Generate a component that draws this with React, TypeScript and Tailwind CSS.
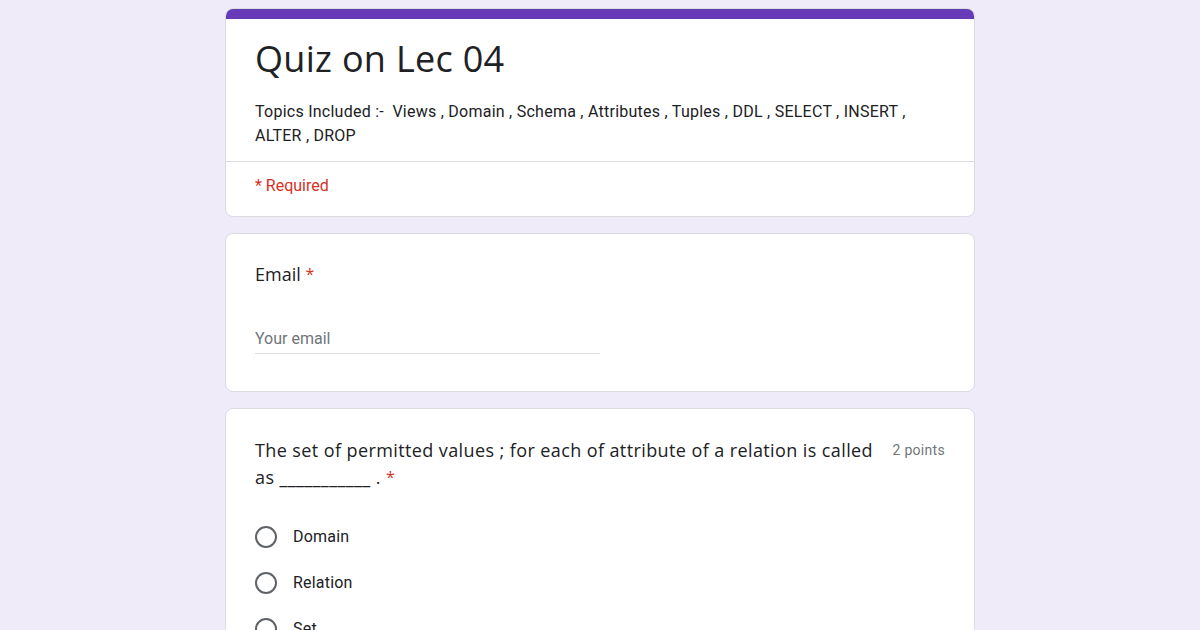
import React from "react";

const heading = { fontFamily: '"Open Sans", "Noto Sans", sans-serif' };

function Radio({ label }: { label: string }) {
  return (
    <div className="flex items-center h-[46px]">
      <div className="w-[22px] h-[22px] rounded-full border-2 border-[#5f6368]" />
      <span className="ml-[16px] text-[16px] text-[#202124] tracking-[0.2px]">{label}</span>
    </div>
  );
}

export default function App() {
  return (
    <div
      className="h-[630px] overflow-hidden bg-[#f0ebf8] flex flex-col items-center pt-2"
      style={{ fontFamily: 'Roboto, "Liberation Sans", sans-serif' }}
    >
      <div className="w-[750px] flex flex-col gap-[16px]">
        <div className="rounded-lg bg-white border border-[#dadce0] overflow-hidden">
          <div className="h-[10px] bg-[#673ab7]" />
          <div className="px-[29px] pt-[18px] pb-[13px]">
            <div className="text-[36px] leading-[44px] text-[#202124] tracking-[0.3px]" style={heading}>
              Quiz on Lec 04
            </div>
            <div className="mt-[19px] text-[16px] leading-[24px] text-[#202124] tracking-[0.25px]">
              Topics Included :-&nbsp; Views , Domain , Schema , Attributes , Tuples , DDL , SELECT , INSERT , ALTER , DROP
            </div>
          </div>
          <div className="border-t border-[#dadce0] px-[29px] pt-[12px] pb-[18px] text-[16px] leading-[24px] text-[#d93025]">
            * Required
          </div>
        </div>

        <div className="rounded-lg bg-white border border-[#dadce0] px-[29px] pt-[28px] pb-[37px]">
          <div className="text-[18px] leading-[24px] text-[#202124]" style={heading}>
            Email <span className="text-[#d93025] text-[16px] align-top">*</span>
          </div>
          <div className="mt-[41px] w-[345px] border-b border-[#dadce0] pb-[2px] text-[16px] leading-[24px] text-[#70757a]">
            Your email
          </div>
        </div>

        <div className="rounded-lg bg-white border border-[#dadce0] px-[29px] pt-[28px] pb-[20px]">
          <div className="flex items-start gap-[18px]">
            <div className="flex-1 text-[18px] leading-[27px] text-[#202124] tracking-[0.4px]" style={heading}>
              The set of permitted values ; for each of attribute of a relation is called as ___________ .{" "}
              <span className="text-[#d93025] text-[16px] align-top">*</span>
            </div>
            <div className="text-[14px] leading-[27px] text-[#70757a] tracking-[0.3px]">2 points</div>
          </div>
          <div className="mt-[23px]">
            <Radio label="Domain" />
            <Radio label="Relation" />
            <Radio label="Set" />
            <Radio label="Schema" />
          </div>
        </div>
      </div>
    </div>
  );
}
